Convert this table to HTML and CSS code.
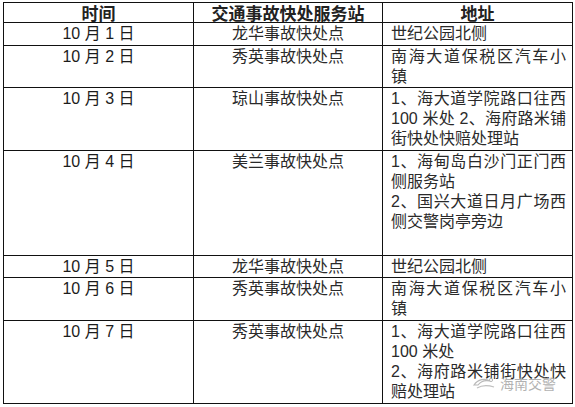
FILE: index.html
```html
<!DOCTYPE html>
<html lang="zh-CN">
<head>
<meta charset="utf-8">
<title>交通事故快处服务站</title>
<link rel="stylesheet" href="styles.css">
</head>
<body>
<div class="page">
  <table class="sched">
    <colgroup>
      <col class="c-date">
      <col class="c-station">
      <col class="c-addr">
    </colgroup>
    <thead>
      <tr class="h-head">
        <th>时间</th>
        <th>交通事故快处服务站</th>
        <th>地址</th>
      </tr>
    </thead>
    <tbody>
      <tr class="h-1">
        <td class="date">10 月 1 日</td>
        <td class="station">龙华事故快处点</td>
        <td class="addr"><div>世纪公园北侧</div></td>
      </tr>
      <tr class="h-2">
        <td class="date">10 月 2 日</td>
        <td class="station">秀英事故快处点</td>
        <td class="addr"><div class="j">南海大道保税区汽车小</div><div>镇</div></td>
      </tr>
      <tr class="h-3">
        <td class="date">10 月 3 日</td>
        <td class="station">琼山事故快处点</td>
        <td class="addr"><div class="j">1、海大道学院路口往西</div><div class="j">100 米处 2、海府路米铺</div><div>街快处快赔处理站</div></td>
      </tr>
      <tr class="h-4">
        <td class="date">10 月 4 日</td>
        <td class="station">美兰事故快处点</td>
        <td class="addr"><div class="j">1、海甸岛白沙门正门西</div><div>侧服务站</div><div class="j">2、国兴大道日月广场西</div><div>侧交警岗亭旁边</div></td>
      </tr>
      <tr class="h-5">
        <td class="date">10 月 5 日</td>
        <td class="station">龙华事故快处点</td>
        <td class="addr"><div>世纪公园北侧</div></td>
      </tr>
      <tr class="h-6">
        <td class="date">10 月 6 日</td>
        <td class="station">秀英事故快处点</td>
        <td class="addr"><div class="j">南海大道保税区汽车小</div><div>镇</div></td>
      </tr>
      <tr class="h-7">
        <td class="date">10 月 7 日</td>
        <td class="station">秀英事故快处点</td>
        <td class="addr"><div class="j">1、海大道学院路口往西</div><div>100 米处</div><div class="j">2、海府路米铺街快处快</div><div>赔处理站</div></td>
      </tr>
    </tbody>
  </table>
  <div class="watermark">
    <svg class="wm-icon" width="24" height="14" viewBox="0 0 24 14" aria-hidden="true">
      <path d="M2 9 C6 3, 13 2, 18 5 C14 4, 9 5, 6 9 Z" fill="none" stroke="#a8a8a8" stroke-width="1.2"/>
      <path d="M5 12 C10 9, 16 9, 22 11" fill="none" stroke="#b0b0b0" stroke-width="1.1"/>
      <circle cx="19" cy="4" r="1.6" fill="none" stroke="#a8a8a8" stroke-width="1"/>
    </svg>
    <span class="wm-text">海南交警</span>
  </div>
</div>
</body>
</html>
```

FILE: styles.css
```css
html, body {
  margin: 0;
  padding: 0;
  background: #ffffff;
}

.page {
  position: relative;
  width: 575px;
  height: 407px;
  padding: 2px 0 0 3px;
  box-sizing: border-box;
  font-family: "Liberation Sans", "Noto Sans CJK SC", sans-serif;
  color: #1c1c1c;
  overflow: hidden;
}

.sched {
  border-collapse: collapse;
  table-layout: fixed;
  width: 569px;
}

.c-date { width: 190px; }
.c-station { width: 189px; }
.c-addr { width: 190px; }

.sched th,
.sched td {
  border: 1px solid #111111;
  padding: 0;
  vertical-align: top;
}

.sched th {
  font-size: 17px;
  font-weight: 700;
  line-height: 19px;
  text-align: center;
  font-family: "Noto Sans CJK SC", sans-serif;
  color: #222;
}

.sched td {
  font-size: 16px;
  line-height: 20px;
  padding-top: 1px;
  font-family: "Liberation Sans", "Noto Sans CJK SC", sans-serif;
}

.date,
.station {
  text-align: center;
}

.station {
  font-family: "Noto Sans CJK SC", sans-serif;
  color: #2a2a2a;
}

.sched td.addr {
  padding: 1px 6px 0 8px;
  text-align: left;
  color: #2a2a2a;
}

.addr .j {
  text-align: justify;
  text-align-last: justify;
}

.h-head { height: 20px; }
.h-1 { height: 23px; }
.h-2 { height: 42px; }
.h-3 { height: 63px; }
.h-4 { height: 105px; }
.h-5 { height: 21px; }
.h-6 { height: 43px; }
.h-7 { height: 83px; }

.watermark {
  position: absolute;
  left: 472px;
  top: 376px;
  display: flex;
  align-items: center;
  gap: 4px;
  opacity: 0.8;
}

.wm-text {
  font-family: "Noto Sans CJK SC", sans-serif;
  font-size: 14px;
  line-height: 14px;
  color: #a0a0a0;
}
```
